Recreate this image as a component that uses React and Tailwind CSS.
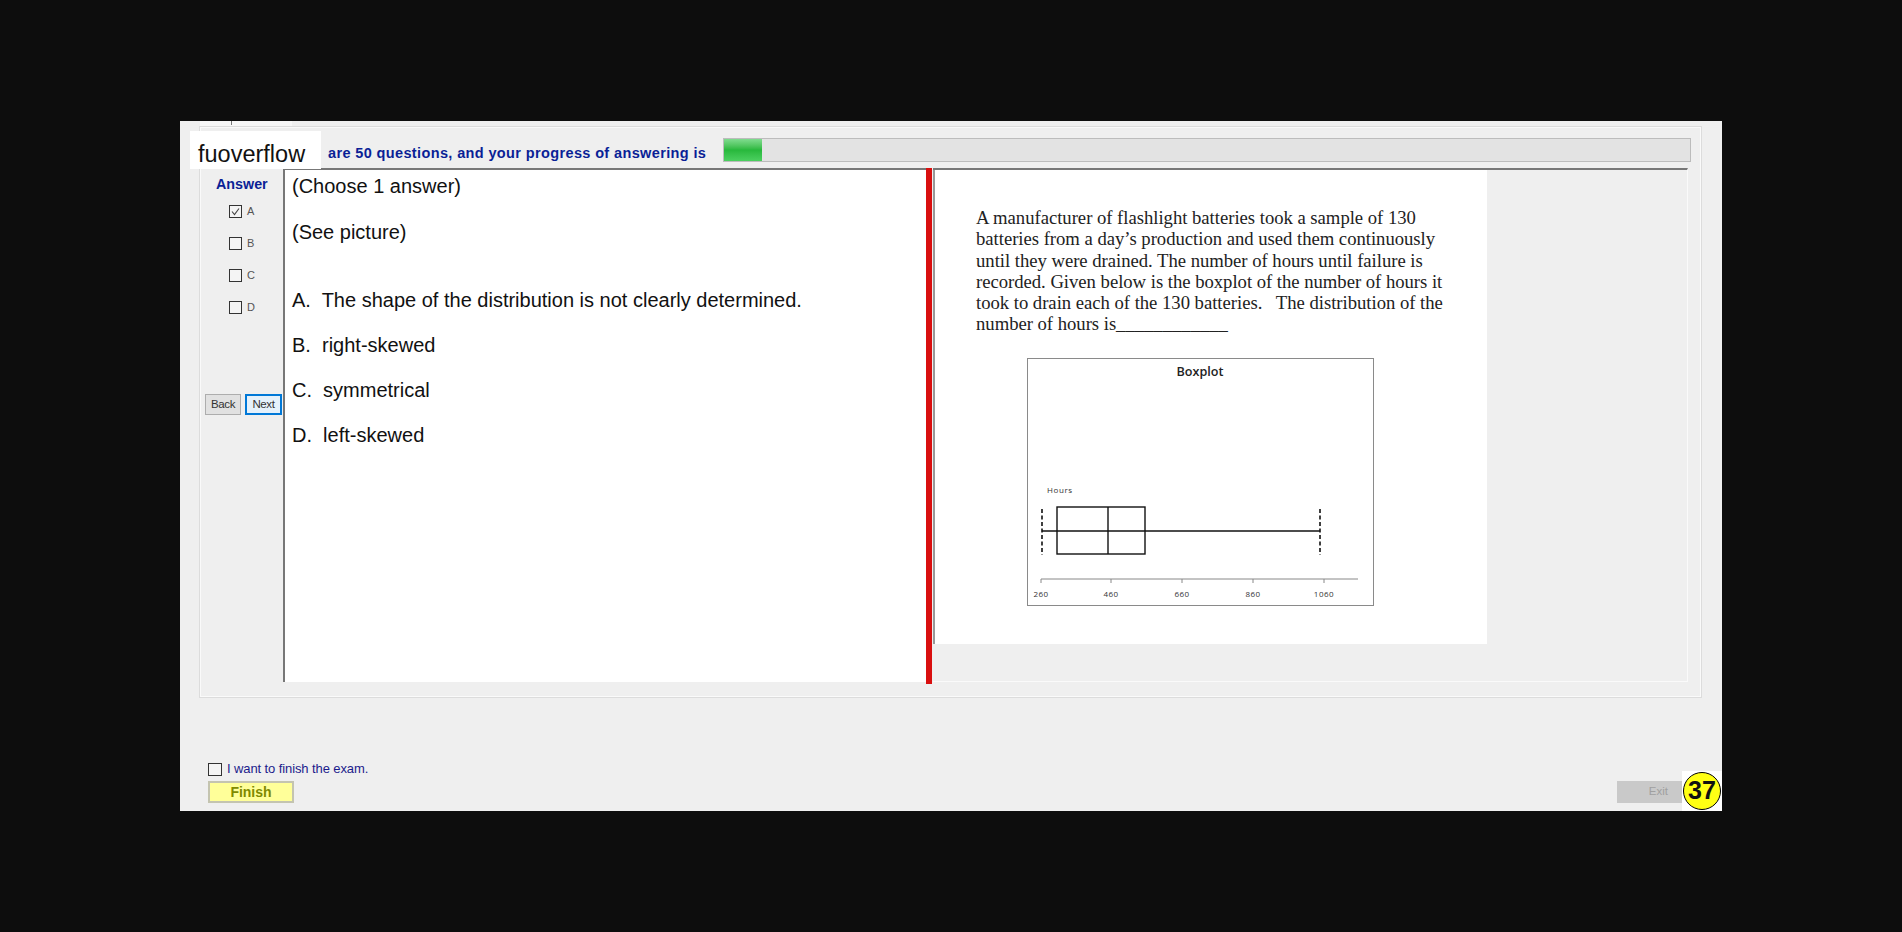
function Check({ checked, label }) {
  return (
    <div className="flex items-start gap-[5px] h-[32px]">
      <div className="w-[13px] h-[13px] border border-[#333] bg-[#f4f4f4] flex items-center justify-center">
        {checked && (
          <svg width="11" height="11" viewBox="0 0 11 11" fill="none">
            <path d="M2 5.5 L4.5 8.5 L9 2.5" stroke="#444" strokeWidth="1.1" />
          </svg>
        )}
      </div>
      <span className="text-[11px] leading-[12px] text-[#555]">{label}</span>
    </div>
  );
}

function Boxplot() {
  const ticks = [
    [14, "260"],
    [84, "460"],
    [155, "660"],
    [226, "860"],
    [297, "1060"],
  ];
  return (
    <svg width="347" height="248" viewBox="0 0 347 248" className="block ml-[92px] mt-[23px]">
      <rect x="0.5" y="0.5" width="346" height="247" fill="#fff" stroke="#8a8a8a" />
      <text x="173" y="18" textAnchor="middle" fontFamily="'Open Sans', sans-serif" fontWeight="600" fontSize="12.6" fill="#222">Boxplot</text>
      <text x="20" y="135" fontFamily="'Open Sans', sans-serif" fontSize="8" letterSpacing="0.6" fill="#333">Hours</text>
      <rect x="30" y="149" width="88" height="47" fill="none" stroke="#111" strokeWidth="1.4" />
      <line x1="81" y1="149" x2="81" y2="196" stroke="#111" strokeWidth="1.4" />
      <line x1="15" y1="173" x2="293" y2="173" stroke="#111" strokeWidth="1.4" />
      <line x1="15" y1="151" x2="15" y2="197" stroke="#111" strokeWidth="1.6" strokeDasharray="4 2.5" />
      <line x1="293" y1="151" x2="293" y2="197" stroke="#111" strokeWidth="1.6" strokeDasharray="4 2.5" />
      <line x1="14" y1="221" x2="331" y2="221" stroke="#888" />
      {ticks.map(([x, t]) => (
        <g key={t}>
          <line x1={x} y1="221" x2={x} y2="225" stroke="#888" />
          <text x={x} y="239" textAnchor="middle" fontFamily="'Open Sans', sans-serif" fontSize="8" letterSpacing="0.5" fill="#333">{t}</text>
        </g>
      ))}
    </svg>
  );
}

export default function App() {
  return (
    <div className="min-h-screen bg-[#0d0d0d] pt-[121px] pl-[180px] font-['Liberation_Sans',Arial,sans-serif]">
      <div className="relative w-[1542px] h-[690px] bg-[#efefef] pl-[20px] pr-[21px] flex flex-col">
        <div className="w-[92px] h-[6px] bg-[#f7f7f7] flex justify-center shrink-0">
          <div className="w-px h-[4px] bg-[#777] mr-[30px]"></div>
        </div>

        <div className="h-[570px] border border-[#fafafa] shadow-[0_0_0_1px_#dcdcdc] pr-[12px] pt-[10px] shrink-0">
          <div className="flex items-center h-[24px] pl-[127px]">
            <span className="mt-[7px] font-bold text-[14.5px] tracking-[0.37px] text-[#0a1f96] w-[395px] shrink-0 whitespace-nowrap">
              are 50 questions, and your progress of answering is
            </span>
            <div className="w-[968px] h-[24px] bg-[#e3e3e3] border border-[#bcbcbc] shrink-0">
              <div className="w-[38px] h-full bg-gradient-to-b from-[#7fdc8f] via-[#27b83c] to-[#4bd060]"></div>
            </div>
          </div>

          <div className="flex h-[514px] mt-[6px]">
            <div className="w-[82px] shrink-0 flex flex-col">
              <div className="h-[30px] pl-[15px] pt-[8px] font-bold text-[14.3px] leading-[16px] text-[#0a1f96]">Answer</div>
              <div className="pl-[28px] pt-[7px]">
                <Check checked label="A" />
                <Check label="B" />
                <Check label="C" />
                <Check label="D" />
              </div>
              <div className="flex gap-[4px] pl-[4px] mt-[61px]">
                <div className="w-[36px] h-[21px] bg-[#e1e1e1] border border-[#adadad] text-[11.5px] tracking-[-0.4px] text-[#333] flex items-center justify-center">Back</div>
                <div className="w-[37px] h-[21px] bg-[#e5f1fb] border-2 border-[#0078d7] text-[11.5px] tracking-[-0.4px] text-[#333] flex items-center justify-center">Next</div>
              </div>
            </div>

            <div className="w-[643px] shrink-0 bg-white border-l-2 border-t-2 border-[#777] pl-[7px] text-[20px] text-[#111] leading-[22px]">
              <p className="mt-[5px]">(Choose 1 answer)</p>
              <p className="mt-[24px]">(See picture)</p>
              <p className="mt-[46px] whitespace-pre">A.  The shape of the distribution is not clearly determined.</p>
              <p className="mt-[23px] whitespace-pre">B.  right-skewed</p>
              <p className="mt-[23px] whitespace-pre">C.  symmetrical</p>
              <p className="mt-[23px] whitespace-pre">D.  left-skewed</p>
            </div>

            <div className="w-[6px] h-[516px] bg-[#d90f0f] shrink-0"></div>

            <div className="flex-1 ml-[1px] border-t-2 border-[#777] border-r border-r-[#fafafa] border-b border-b-[#fafafa]">
              <div className="w-[554px] h-[474px] bg-white border-l-2 border-[#999] pt-[37px] overflow-hidden">
                <p className="pl-[41px] font-['Liberation_Serif',serif] text-[18.7px] leading-[21.3px] tracking-[-0.03px] text-[#222] whitespace-pre">
                  {"A manufacturer of flashlight batteries took a sample of 130\nbatteries from a day\u2019s production and used them continuously\nuntil they were drained. The number of hours until failure is\nrecorded. Given below is the boxplot of the number of hours it\ntook to drain each of the 130 batteries.   The distribution of the\nnumber of hours is____________"}
                </p>
                <Boxplot />
              </div>
            </div>
          </div>
        </div>

        <div className="flex justify-between items-end flex-1 pl-[8px] pr-[19px] pb-[8px]">
          <div>
            <div className="flex items-center gap-[5px]">
              <div className="w-[14px] h-[13px] border border-[#333] bg-[#f4f4f4]"></div>
              <span className="text-[13px] leading-[14px] tracking-[-0.1px] text-[#1c1c8c]">I want to finish the exam.</span>
            </div>
            <div className="mt-[5px] w-[86px] h-[22px] bg-[#ffff99] border-2 border-[#c4c4b0] flex items-center justify-center font-bold text-[14px] text-[#808a00]">
              Finish
            </div>
          </div>
          <div className="w-[65px] h-[22px] bg-[#c9c9c9] flex items-center justify-end pr-[14px] text-[11.5px] text-[#a0a0a0]">
            Exit
          </div>
        </div>

        <div className="absolute left-[10px] top-[10px] w-[131px] h-[38px] bg-white pl-[8px] pt-[10px] flex items-center text-[23.5px] text-[#111]">
          fuoverflow
        </div>
        <div className="absolute right-0 bottom-0 w-[40px] h-[40px] bg-white flex items-center justify-center">
          <div className="w-[38px] h-[38px] rounded-full bg-[#ffff14] border border-black flex items-center justify-center font-bold text-[25px] text-[#111]">
            37
          </div>
        </div>
      </div>
    </div>
  );
}
